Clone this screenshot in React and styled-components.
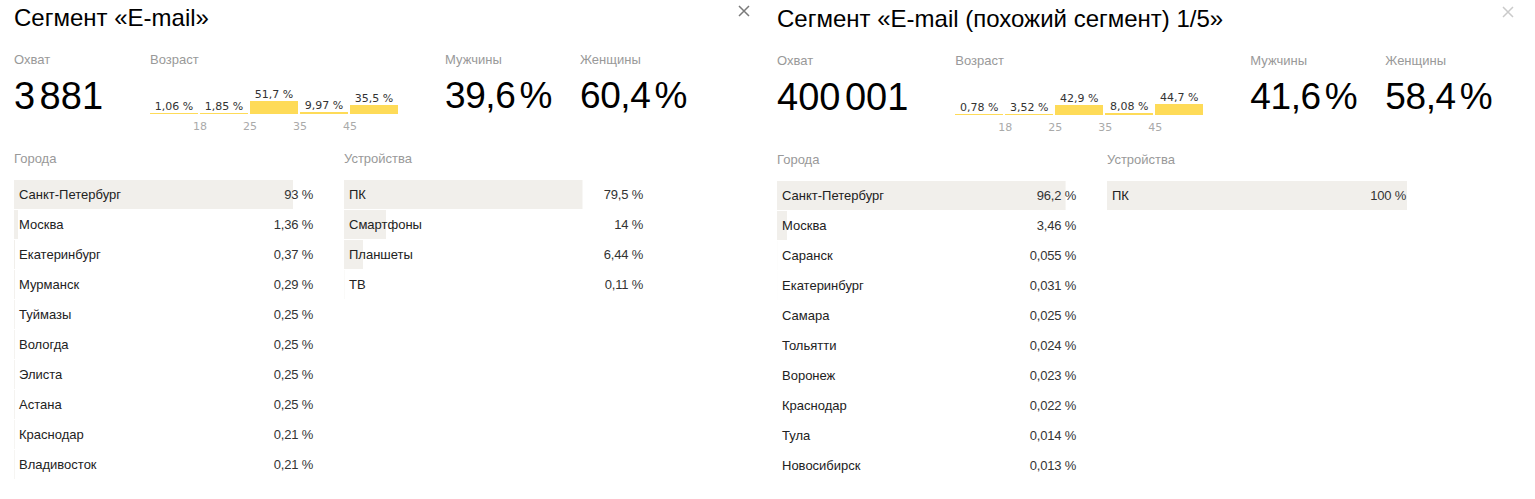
import React from "react";
import styled, { createGlobalStyle } from "styled-components";

const GlobalStyle = createGlobalStyle`
  html, body { margin: 0; padding: 0; background: #fff; }
  body {
    font-family: "Liberation Sans", Arial, sans-serif;
    color: #000;
    overflow: hidden;
  }
`;

const segments = [
  {
    title: "Сегмент «E-mail»",
    closeColor: "#7a7a7a",
    shift: 0,
    reach: "3 881",
    reachGap: 47,
    age: [
      { v: 1.06, t: "1,06 %" },
      { v: 1.85, t: "1,85 %" },
      { v: 51.7, t: "51,7 %" },
      { v: 9.97, t: "9,97 %" },
      { v: 35.5, t: "35,5 %" },
    ],
    male: "39,6 %",
    female: "60,4 %",
    cities: [
      ["Санкт-Петербург", 93, "93 %"],
      ["Москва", 1.36, "1,36 %"],
      ["Екатеринбург", 0.37, "0,37 %"],
      ["Мурманск", 0.29, "0,29 %"],
      ["Туймазы", 0.25, "0,25 %"],
      ["Вологда", 0.25, "0,25 %"],
      ["Элиста", 0.25, "0,25 %"],
      ["Астана", 0.25, "0,25 %"],
      ["Краснодар", 0.21, "0,21 %"],
      ["Владивосток", 0.21, "0,21 %"],
    ],
    devices: [
      ["ПК", 79.5, "79,5 %"],
      ["Смартфоны", 14, "14 %"],
      ["Планшеты", 6.44, "6,44 %"],
      ["ТВ", 0.11, "0,11 %"],
    ],
  },
  {
    title: "Сегмент «E-mail (похожий сегмент) 1/5»",
    closeColor: "#cacaca",
    shift: 1,
    reach: "400 001",
    reachGap: 47,
    age: [
      { v: 0.78, t: "0,78 %" },
      { v: 3.52, t: "3,52 %" },
      { v: 42.9, t: "42,9 %" },
      { v: 8.08, t: "8,08 %" },
      { v: 44.7, t: "44,7 %" },
    ],
    male: "41,6 %",
    female: "58,4 %",
    cities: [
      ["Санкт-Петербург", 96.2, "96,2 %"],
      ["Москва", 3.46, "3,46 %"],
      ["Саранск", 0.055, "0,055 %"],
      ["Екатеринбург", 0.031, "0,031 %"],
      ["Самара", 0.025, "0,025 %"],
      ["Тольятти", 0.024, "0,024 %"],
      ["Воронеж", 0.023, "0,023 %"],
      ["Краснодар", 0.022, "0,022 %"],
      ["Тула", 0.014, "0,014 %"],
      ["Новосибирск", 0.013, "0,013 %"],
    ],
    devices: [["ПК", 100, "100 %"]],
  },
];

const Page = styled.div`
  display: grid;
  grid-template-columns: 763px 764px;
`;

const Panel = styled.section`
  padding: ${(p) => 3 + p.$shift}px 13px 0 14px;
  min-width: 0;
`;

const Header = styled.header`
  display: flex;
  justify-content: space-between;
  align-items: flex-start;
`;

const Title = styled.h2`
  margin: 0;
  font-size: 24px;
  line-height: 30px;
  font-weight: normal;
  color: #000;
  white-space: nowrap;
`;

const Close = styled.button`
  margin: 2px 0 0;
  padding: 0;
  border: 0;
  background: none;
  width: 12px;
  height: 12px;
  display: flex;
  color: ${(p) => p.$color};
  cursor: pointer;
`;

const Stats = styled.div`
  display: flex;
  align-items: flex-start;
  margin-top: 19px;
`;

const StatBlock = styled.div`
  display: flex;
  flex-direction: column;
  flex: none;
  ${(p) => (p.$width ? `width: ${p.$width}px;` : "")}
  ${(p) => (p.$after ? `margin-right: ${p.$after}px;` : "")}
`;

const Label = styled.div`
  font-size: 13px;
  line-height: 16px;
  color: #999;
  white-space: nowrap;
`;

const BigValue = styled.div`
  margin-top: 8px;
  font-size: ${(p) => (p.$small ? 37 : 38)}px;
  line-height: 40px;
  word-spacing: -0.16em;
  letter-spacing: ${(p) => (p.$small ? "-0.4px" : "0")};
  color: #000;
  white-space: nowrap;
`;

const Chart = styled.div`
  display: flex;
  gap: 2px;
  height: 46px;
  align-items: flex-end;
`;

const Segment = styled.div`
  width: 48px;
  display: flex;
  flex-direction: column;
  justify-content: flex-end;
`;

const SegLabel = styled.div`
  font-family: "DejaVu Sans", Verdana, sans-serif;
  font-size: 11px;
  line-height: 13px;
  color: #333;
  text-align: center;
  white-space: nowrap;
`;

const SegBar = styled.div`
  background: #fedb58;
`;

const Ticks = styled.div`
  display: flex;
  padding-left: 25px;
  margin-top: 6px;
`;

const Tick = styled.div`
  width: 50px;
  text-align: center;
  font-family: "DejaVu Sans", Verdana, sans-serif;
  font-size: 11px;
  line-height: 13px;
  color: #aaa;
`;

const Lists = styled.div`
  display: flex;
  gap: 30px;
  margin-top: 18px;
`;

const List = styled.div`
  width: 300px;
  display: flex;
  flex-direction: column;
`;

const ListLabel = styled(Label)`
  margin-bottom: 13px;
`;

const Row = styled.div.attrs((p) => ({
  style: { backgroundSize: `${p.$pct}% 29px` },
}))`
  display: flex;
  justify-content: space-between;
  height: 30px;
  line-height: 29px;
  padding: 0 1px 0 5px;
  font-size: 13px;
  background-image: linear-gradient(#f1efeb, #f1efeb);
  background-repeat: no-repeat;
  background-position: 0 0;
`;

const RowName = styled.span`
  color: #222;
  white-space: nowrap;
`;

const RowValue = styled.span`
  color: #333;
  white-space: nowrap;
  letter-spacing: -0.2px;
`;

function CloseIcon() {
  return (
    <svg width="12" height="12" viewBox="0 0 12 12" fill="none">
      <path d="M1 1L11 11M11 1L1 11" stroke="currentColor" strokeWidth="1.5" />
    </svg>
  );
}

function SegmentPanel({ s }) {
  return (
    <Panel $shift={s.shift}>
      <Header>
        <Title>{s.title}</Title>
        <Close $color={s.closeColor} aria-label="Закрыть">
          <CloseIcon />
        </Close>
      </Header>
      <Stats>
        <StatBlock $after={s.reachGap}>
          <Label>Охват</Label>
          <BigValue>{s.reach}</BigValue>
        </StatBlock>
        <StatBlock $width={250} $after={45}>
          <Label>Возраст</Label>
          <Chart>
            {s.age.map((a) => (
              <Segment key={a.t}>
                <SegLabel>{a.t}</SegLabel>
                <SegBar style={{ height: `${Math.max(1, a.v * 0.245)}px` }} />
              </Segment>
            ))}
          </Chart>
          <Ticks>
            {["18", "25", "35", "45"].map((t) => (
              <Tick key={t}>{t}</Tick>
            ))}
          </Ticks>
        </StatBlock>
        <StatBlock $width={135}>
          <Label>Мужчины</Label>
          <BigValue $small>{s.male}</BigValue>
        </StatBlock>
        <StatBlock $width={135}>
          <Label>Женщины</Label>
          <BigValue $small>{s.female}</BigValue>
        </StatBlock>
      </Stats>
      <Lists>
        <List>
          <ListLabel>Города</ListLabel>
          {s.cities.map(([name, pct, text]) => (
            <Row key={name} $pct={pct}>
              <RowName>{name}</RowName>
              <RowValue>{text}</RowValue>
            </Row>
          ))}
        </List>
        <List>
          <ListLabel>Устройства</ListLabel>
          {s.devices.map(([name, pct, text]) => (
            <Row key={name} $pct={pct}>
              <RowName>{name}</RowName>
              <RowValue>{text}</RowValue>
            </Row>
          ))}
        </List>
      </Lists>
    </Panel>
  );
}

export default function App() {
  return (
    <>
      <GlobalStyle />
      <Page>
        {segments.map((s) => (
          <SegmentPanel key={s.title} s={s} />
        ))}
      </Page>
    </>
  );
}
